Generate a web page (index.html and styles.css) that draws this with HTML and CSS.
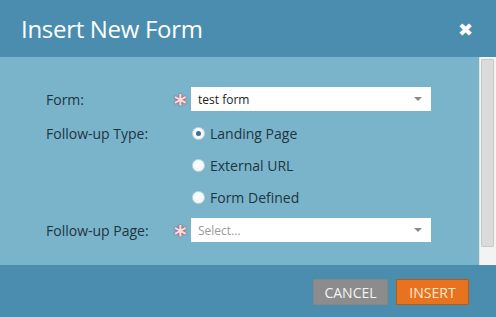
FILE: index.html
```html
<!DOCTYPE html>
<html lang="en">
<head>
    <meta charset="UTF-8">
    <title>Insert New Form</title>
    <link rel="stylesheet" href="styles.css">
</head>
<body>

<div class="dialog">
    <div class="dialog-header">
        <h1>Insert New Form</h1>
        <span class="close">&#x2716;</span>
    </div>

    <div class="dialog-body">
        <div class="form-grid">
            <div class="label">Form:</div>
            <div class="req">*</div>
            <div class="select">
                <span>test form</span>
                <span class="arrow"></span>
            </div>

            <div class="label">Follow-up Type:</div>
            <div></div>
            <label class="radio"><span class="dot checked"></span>Landing Page</label>

            <div></div>
            <div></div>
            <label class="radio"><span class="dot"></span>External URL</label>

            <div></div>
            <div></div>
            <label class="radio"><span class="dot"></span>Form Defined</label>

            <div class="label">Follow-up Page:</div>
            <div class="req">*</div>
            <div class="select">
                <span class="placeholder">Select...</span>
                <span class="arrow"></span>
            </div>
        </div>
        <div class="scrollbar"><div class="thumb"></div></div>
    </div>

    <div class="dialog-footer">
        <button class="button cancel">CANCEL</button>
        <button class="button insert">INSERT</button>
    </div>
</div>

</body>
</html>
```

FILE: styles.css
```css
body {
    margin: 0;
    font-family: 'Open Sans', 'DejaVu Sans', sans-serif;
    background: #4a8dae;
}

.dialog {
    width: 496px;
    height: 317px;
    display: flex;
    flex-direction: column;
}

.dialog-header {
    height: 57px;
    background: #4a8dae;
    display: flex;
    align-items: center;
    justify-content: space-between;
    padding: 0 23px 0 21px;
}

h1 {
    margin: 0;
    font-size: 24px;
    font-weight: normal;
    color: #fff;
    letter-spacing: -0.3px;
}

.close {
    color: #fff;
    font-size: 18px;
    font-weight: bold;
    font-family: 'DejaVu Sans', sans-serif;
    margin-top: 1px;
}

.dialog-body {
    height: 208px;
    background: #7ab4cb;
    display: flex;
}

.form-grid {
    flex: 1;
    display: grid;
    grid-template-columns: 128px 17px 240px;
    grid-template-rows: 36px 32px 32px 32px 34px;
    align-items: center;
    padding: 24px 0 0 46px;
    align-content: start;
    color: #1e3440;
    font-size: 14px;
}

.label {
    color: #1d3541;
}

.req {
    color: #f9dde0;
    font-size: 24px;
    font-weight: bold;
    line-height: 1;
    padding-top: 10px;
    text-shadow: 0 0 2px #a8485a, 0 0 1px #a8485a;
    font-family: 'DejaVu Sans', sans-serif;
}

.select {
    height: 24px;
    background: #fff;
    display: flex;
    align-items: center;
    justify-content: space-between;
    padding: 0 9px 0 7px;
    font-size: 12px;
    color: #222;
}

.placeholder {
    color: #9a9a9a;
}

.arrow {
    width: 0;
    height: 0;
    border-left: 4px solid transparent;
    border-right: 4px solid transparent;
    border-top: 4px solid #8a8a8a;
}

.radio {
    display: flex;
    align-items: center;
    gap: 5px;
    padding-left: 1px;
    font-size: 14px;
    color: #1e3440;
}

.dot {
    width: 11px;
    height: 11px;
    border-radius: 50%;
    border: 1px solid #cfd6da;
    background: radial-gradient(circle at 50% 40%, #ffffff, #eef0f1);
    position: relative;
}

.dot.checked::after {
    content: '';
    position: absolute;
    left: 3px;
    top: 3px;
    width: 5px;
    height: 5px;
    border-radius: 50%;
    background: #3d6f8e;
}

.scrollbar {
    width: 13px;
    background: #f3f3f3;
    border-left: 1px solid #e2e2e2;
    padding: 2px 2px 0 1px;
}

.thumb {
    height: 186px;
    background: #dbdbdb;
    border: 1px solid #c9c9c9;
    border-radius: 1px;
}

.dialog-footer {
    flex: 1;
    background: #4a8dae;
    display: flex;
    justify-content: flex-end;
    align-items: flex-start;
    gap: 8px;
    padding: 14px 27px 0 0;
}

.button {
    height: 26px;
    font-family: 'Open Sans', sans-serif;
    font-size: 14px;
    padding: 0;
    border-radius: 1px;
    cursor: pointer;
}

.cancel {
    width: 75px;
    background: #8c8c8c;
    border: 1px solid #868686;
    color: #f3f3f3;
}

.insert {
    width: 73px;
    background: #e7731f;
    border: 1px solid #b45a18;
    color: #fde9cf;
}
```
